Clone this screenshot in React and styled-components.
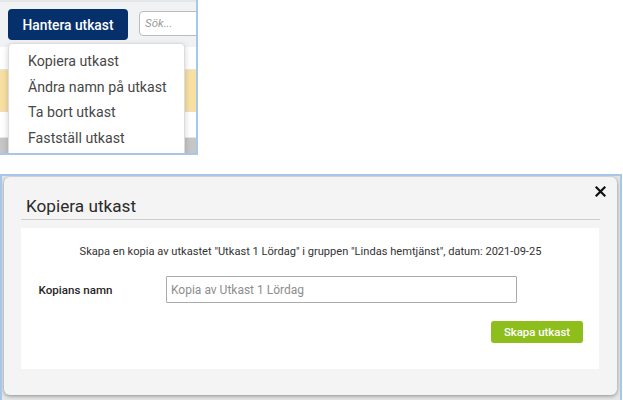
import React from "react";
import styled, { createGlobalStyle } from "styled-components";

const GlobalStyle = createGlobalStyle`
  html, body { margin: 0; padding: 0; background: #ffffff; }
  body { font-family: Roboto, "Liberation Sans", Arial, sans-serif; }
  * { box-sizing: border-box; }
`;

const Page = styled.div`
  display: flex;
  flex-direction: column;
  align-items: flex-start;
  gap: 19px;
  width: 623px;
  height: 400px;
  overflow: hidden;
`;

const TopShot = styled.div`
  position: relative;
  width: 198px;
  height: 155px;
  border-right: 2px solid #a7c7e9;
  border-bottom: 2px solid #a7c7e9;
  background: #ffffff;
  overflow: hidden;
  display: flex;
  flex-direction: column;
`;

const Toolbar = styled.div`
  display: flex;
  align-items: flex-start;
  gap: 11px;
  height: 47px;
  padding: 9px 0 0 8px;
  background: #f1f2f3;
  border-top: 2px solid #e4e6e8;
  flex-shrink: 0;
`;

const ManageButton = styled.button`
  width: 120px;
  height: 31px;
  margin-top: -2px;
  border: none;
  border-radius: 4px;
  background: #05306c;
  color: #ffffff;
  font-family: Roboto, sans-serif;
  font-weight: 500;
  font-size: 13.8px;
  padding: 0;
  flex-shrink: 0;
`;

const SearchBox = styled.div`
  width: 80px;
  height: 25px;
  flex-shrink: 0;
  border: 1px solid #bcbcbc;
  border-radius: 4px;
  background: #ffffff;
  padding-left: 5px;
  font-style: italic;
  font-size: 11.5px;
  line-height: 23px;
  color: #9a9a9a;
`;

const TableRow = styled.div`
  height: ${(p) => p.$h}px;
  flex-shrink: 0;
  background: ${(p) => p.$bg};
  border-bottom: 1px solid ${(p) => p.$line};
`;

const Dropdown = styled.div`
  position: absolute;
  left: 8px;
  top: 43px;
  width: 177px;
  padding: 5px 0 8px;
  background: #ffffff;
  border: 1px solid #dcdcdc;
  border-radius: 4px;
  box-shadow: 0 2px 6px rgba(0, 0, 0, 0.18);
`;

const MenuItem = styled.div`
  padding-left: 19px;
  height: 25.6px;
  line-height: 25.6px;
  font-size: 14.2px;
  color: #474747;
  white-space: nowrap;
`;

const BottomShot = styled.div`
  width: 622px;
  height: 226px;
  flex-shrink: 0;
  border: 2px solid #a7c7e9;
  border-bottom: none;
  padding: 1px 3px 0 2px;
  background: #e6e7e8;
  overflow: hidden;
`;

const Modal = styled.div`
  position: relative;
  width: 613px;
  height: 218px;
  background: #f4f4f4;
  border-radius: 6px;
  box-shadow: 0 1px 4px rgba(0, 0, 0, 0.4);
  padding: 0 18px 26px 17px;
  display: flex;
  flex-direction: column;
`;

const Header = styled.div`
  height: 43px;
  padding: 19px 0 0 5px;
  border-bottom: 1px solid #cdcdcd;
  margin-right: -1px;
`;

const Title = styled.h2`
  margin: 0;
  font-weight: 400;
  font-size: 17.2px;
  line-height: 20px;
  color: #2a2a2a;
`;

const CloseButton = styled.button`
  position: absolute;
  top: 9px;
  right: 11px;
  width: 11px;
  height: 11px;
  padding: 0;
  border: none;
  background: transparent;
  display: flex;
`;

const Panel = styled.div`
  margin-top: 8px;
  flex: 1;
  background: #ffffff;
  padding: 16px 16px 0 17px;
  display: flex;
  flex-direction: column;
`;

const Description = styled.p`
  margin: 0;
  text-align: center;
  font-size: 11.1px;
  line-height: 16px;
  color: #333333;
  white-space: nowrap;
`;

const FieldRow = styled.div`
  display: flex;
  align-items: center;
  margin-top: 16px;
  padding-left: 0.5px;
`;

const Label = styled.label`
  width: 127.5px;
  font-weight: 500;
  font-size: 11.6px;
  color: #262626;
`;

const NameInput = styled.input`
  width: 351px;
  height: 27px;
  border: 1px solid #aaaaaa;
  border-radius: 1px;
  padding: 0 0 0 4px;
  font-family: Roboto, sans-serif;
  font-size: 12px;
  color: #333;
  outline: none;
  &::placeholder { color: #8e8e8e; }
`;

const Actions = styled.div`
  display: flex;
  justify-content: flex-end;
  margin-top: 18px;
`;

const PrimaryButton = styled.button`
  width: 92px;
  height: 22px;
  border: none;
  border-radius: 3px;
  background: #8dbe1c;
  color: #ffffff;
  font-family: Roboto, sans-serif;
  font-weight: 500;
  font-size: 11.4px;
  padding: 0;
`;

const menu = ["Kopiera utkast", "Ändra namn på utkast", "Ta bort utkast", "Fastställ utkast"];

export default function App() {
  return (
    <>
      <GlobalStyle />
      <Page>
        <TopShot>
          <Toolbar>
            <ManageButton>Hantera utkast</ManageButton>
            <SearchBox>Sök...</SearchBox>
          </Toolbar>
          <TableRow $h={23} $bg="#ffffff" $line="#e6e6e6" />
          <TableRow $h={42} $bg="#f8e0a3" $line="#ece0c0" />
          <TableRow $h={26} $bg="#ffffff" $line="#e6e6e6" />
          <TableRow $h={20} $bg="#c6c6c6" $line="#c6c6c6" />
          <Dropdown>
            {menu.map((m) => (
              <MenuItem key={m}>{m}</MenuItem>
            ))}
          </Dropdown>
        </TopShot>
        <BottomShot>
          <Modal>
            <Header>
              <Title>Kopiera utkast</Title>
            </Header>
            <CloseButton aria-label="Stäng">
              <svg width="11" height="11" viewBox="0 0 11 11">
                <path d="M1.5 1.5 L9.5 9.5 M9.5 1.5 L1.5 9.5" stroke="#111" strokeWidth="2.2" strokeLinecap="square" />
              </svg>
            </CloseButton>
            <Panel>
              <Description>
                Skapa en kopia av utkastet "Utkast 1 Lördag" i gruppen "Lindas hemtjänst", datum: 2021-09-25
              </Description>
              <FieldRow>
                <Label>Kopians namn</Label>
                <NameInput placeholder="Kopia av Utkast 1 Lördag" />
              </FieldRow>
              <Actions>
                <PrimaryButton>Skapa utkast</PrimaryButton>
              </Actions>
            </Panel>
          </Modal>
        </BottomShot>
      </Page>
    </>
  );
}
